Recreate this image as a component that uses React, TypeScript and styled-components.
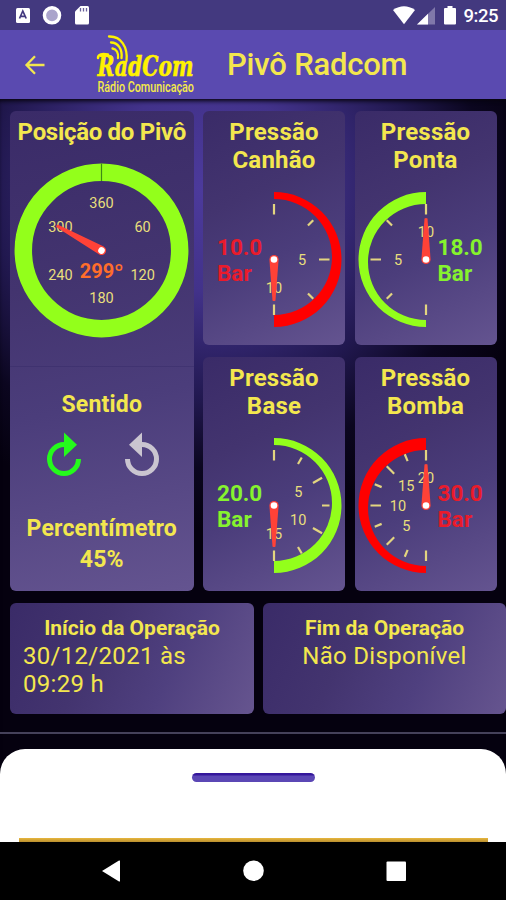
import React from "react";
import styled, { createGlobalStyle } from "styled-components";

const YELLOW = "#f3e74e";
const LIME = "#93ff1b";
const RED = "#ff0000";

const GlobalStyle = createGlobalStyle`
  *, *::before, *::after { box-sizing: border-box; }
  html, body { margin: 0; padding: 0; background: #000; }
  body { font-family: Roboto, "Liberation Sans", sans-serif; }
  svg { display: block; }
`;

const Screen = styled.div`
  width: 506px;
  height: 900px;
  display: flex;
  flex-direction: column;
  overflow: hidden;
  color: ${YELLOW};
`;

const StatusBar = styled.div`
  height: 30px;
  flex: none;
  display: flex;
  align-items: center;
  justify-content: space-between;
  padding: 0 8px 0 16px;
  background: #43397f;
`;

const StatusGroup = styled.div`
  display: flex;
  align-items: center;
`;

const Clock = styled.span`
  color: #fff;
  font-size: 18.5px;
  font-weight: 500;
  line-height: 30px;
  letter-spacing: -0.5px;
  margin-left: 8px;
  padding-top: 2px;
`;

const AppBar = styled.header`
  height: 69px;
  flex: none;
  display: flex;
  align-items: center;
  padding-left: 24px;
  background: #5a4ab0;
`;

const LogoBox = styled.div`
  margin-left: 46px;
  width: 110px;
  height: 69px;
`;

const ScreenTitle = styled.h1`
  margin: 0 0 0 26px;
  font-size: 31px;
  line-height: 69px;
  font-weight: 500;
  letter-spacing: -0.2px;
  white-space: nowrap;
`;

const Body = styled.main`
  height: 743px;
  flex: none;
  display: flex;
  flex-direction: column;
  padding: 12px 0 0 10px;
  background: radial-gradient(circle 340px at 205px 90px, #4c3a9c 0%, #42328a 30%, #21184f 62%, #0b061f 82%, #05010f 100%);
  box-shadow: inset 0 4px 4px -2px #07040f;
`;

const CardGrid = styled.section`
  flex: none;
  display: grid;
  grid-template-columns: 183.5px 142px 142px;
  grid-template-rows: 234px 234px;
  gap: 12px 9.5px;
`;

const Card = styled.article<{ $tall?: boolean }>`
  grid-row: ${(p) => (p.$tall ? "span 2" : "auto")};
  display: flex;
  flex-direction: column;
  align-items: center;
  padding-top: 7px;
  border-radius: 6px;
  overflow: hidden;
  background: linear-gradient(${(p) => (p.$tall ? "168deg" : "155deg")}, #3a2b68 0%, #43346f 35%, #4b3d7b 60%, #645490 100%);
`;

const CardTitle = styled.h2<{ $spacing?: number; $top?: number }>`
  margin: ${(p) => p.$top ?? 0}px 0 0;
  font-size: 24px;
  line-height: 28px;
  font-weight: 700;
  letter-spacing: ${(p) => p.$spacing ?? 0.2}px;
  text-align: center;
  white-space: nowrap;
`;

const SubTitle = styled(CardTitle)`
  font-size: 23px;
  line-height: 31px;
`;

const Separator = styled.div`
  width: 184px;
  height: 1px;
  margin-top: 26px;
  background: rgba(50, 36, 100, 0.35);
`;

const Directions = styled.div`
  display: flex;
  gap: 30px;
  margin: 9px 0 0 3px;
`;

const OperationRow = styled.section`
  flex: none;
  display: grid;
  grid-template-columns: 244px 243px;
  gap: 9px;
  margin-top: 12px;
`;

const OperationCard = styled.article`
  height: 111px;
  padding: 12px 13px 0 13px;
  border-radius: 6px;
  background: linear-gradient(115deg, #3a2b68 0%, #43346f 35%, #4f407f 65%, #66558f 100%);
`;

const OperationTitle = styled.h3`
  margin: 0;
  font-size: 21px;
  line-height: 27px;
  font-weight: 700;
  text-align: center;
  white-space: nowrap;
`;

const OperationText = styled.p<{ $center?: boolean }>`
  margin: 0;
  font-size: 24px;
  line-height: 28px;
  letter-spacing: 0.3px;
  white-space: pre-line;
  text-align: ${(p) => (p.$center ? "center" : "left")};
`;

const Rule = styled.div`
  flex: none;
  height: 2px;
  margin: 18px 0 0 -10px;
  background: #45415a;
`;

const Sheet = styled.section`
  flex: none;
  height: 93px;
  margin: 15px 0 0 -10px;
  display: flex;
  flex-direction: column;
  align-items: center;
  justify-content: space-between;
  padding-top: 24px;
  border-radius: 25px 25px 0 0;
  background: #fff;
`;

const Handle = styled.div`
  width: 123px;
  height: 9px;
  border-radius: 5px;
  background: linear-gradient(#35179c 0 2px, #5b47b5 3px);
`;

const SheetEdge = styled.div`
  width: 469px;
  height: 4px;
  background: linear-gradient(#e8b63c, #b98f2f);
`;

const NavBar = styled.nav`
  height: 58px;
  flex: none;
  display: flex;
  align-items: center;
  justify-content: center;
  background: #000;
`;

const polar = (r: number, deg: number) => {
  const a = (deg * Math.PI) / 180;
  return { x: r * Math.sin(a), y: -r * Math.cos(a) };
};

const Needle = ({ angle, length }: { angle: number; length: number }) => (
  <g transform={`rotate(${angle})`}>
    <path d={`M-4.6 0 L-1.5 ${-length} Q0 ${-length - 1} 1.5 ${-length} L4.6 0 A4.6 4.6 0 0 1 -4.6 0Z`} fill="#ff4237" />
    <circle r="3.3" fill="#fff" />
  </g>
);

const ScaleLabel = styled.text`
  font-size: 14.5px;
  fill: #e9df7c;
  text-anchor: middle;
`;

const PivotReading = styled.text`
  font-size: 20px;
  font-weight: 700;
  fill: #ff6d2b;
  text-anchor: middle;
`;

const Reading = styled.text`
  font-size: 22.5px;
  font-weight: 700;
`;

const PivotGauge = () => (
  <svg width="183" height="194" viewBox="-91.5 -104.5 183 194">
    <circle r="78.2" fill="none" stroke={LIME} strokeWidth="17.5" />
    <path d="M0 -87V-69.5" stroke="#3d8a16" strokeWidth="1.2" />
    {[60, 120, 180, 240, 300, 360].map((n) => {
      const p = polar(47.5, n);
      return (
        <ScaleLabel key={n} x={p.x} y={p.y + 5.3}>
          {n}
        </ScaleLabel>
      );
    })}
    <PivotReading x="0" y="27">299º</PivotReading>
    <Needle angle={299} length={51} />
  </svg>
);

type PressureProps = {
  side: "left" | "right";
  labels: number[];
  max: number;
  steps: number;
  color: string;
  textColor: string;
  value: string;
};

const PressureGauge = ({ side, labels, max, steps, color, textColor, value }: PressureProps) => {
  const base = side === "right" ? 0 : 180;
  const textX = side === "right" ? -57 : 11.5;
  return (
    <svg width="142" height="171" viewBox="-71 -85.5 142 171">
      <path transform={`rotate(${base})`} d="M0 -67.5A67.5 67.5 0 0 1 0 67.5V55.5A58 58 0 0 0 0 -60.5Z" fill={color} />
      {Array.from({ length: steps + 1 }, (_, i) => {
        const angle = base + (180 / steps) * i;
        const a = polar(i % 2 ? 48 : 45, angle);
        const b = polar(55.5, angle);
        return <line key={i} x1={a.x} y1={a.y} x2={b.x} y2={b.y} stroke="#e3d580" strokeWidth="2.2" />;
      })}
      {labels.map((n) => {
        const p = polar(28, base + (180 * n) / max);
        return (
          <ScaleLabel key={n} x={p.x} y={p.y + 5.3}>
            {n}
          </ScaleLabel>
        );
      })}
      <Reading x={textX} y="-5" fill={textColor}>{value}</Reading>
      <Reading x={textX} y="21" fill={textColor}>Bar</Reading>
      <Needle angle={base + 180} length={41} />
    </svg>
  );
};

const RotateIcon = ({ color, clockwise }: { color: string; clockwise?: boolean }) => (
  <svg width="48" height="52" viewBox="-24 -30 48 52">
    <g transform={clockwise ? "scale(-1 1)" : undefined}>
      <path d="M0 -14.500A14.500 14.500 0 1 1 -14.500 0" fill="none" stroke={color} strokeWidth="5" />
      <path d="M0 -26.500V-2L-13 -14.300Z" fill={color} />
    </g>
  </svg>
);

const LogoScript = styled.text`
  font-family: "DejaVu Serif", serif;
  font-size: 27px;
  font-weight: 700;
  font-style: italic;
  fill: #fff200;
  stroke: #fff200;
  stroke-width: 0.6px;
`;

const LogoCaption = styled.text`
  font-size: 14px;
  font-weight: 500;
  fill: #f6ea49;
`;

const Logo = () => (
  <LogoBox>
    <svg width="110" height="69" viewBox="91 30 110 69" overflow="visible">
      <g fill="none" stroke="#fff200" strokeWidth="2.3" strokeLinecap="round">
        <path d="M109 36.500C121 36 128 47 126.500 61" />
        <path d="M111 42.500C118 42.500 122.500 49 121.500 58" />
        <path d="M112.500 48.500C116.500 49 118.500 53 118 58" />
      </g>
      <path d="M98 58C98 54 102 53.500 108 54.500" fill="none" stroke="#fff200" strokeWidth="2.500" strokeLinecap="round" />
      <LogoScript x="97.500" y="76" textLength="96" lengthAdjust="spacingAndGlyphs">RadCom</LogoScript>
      <LogoCaption x="97.500" y="91.500" textLength="96.500" lengthAdjust="spacingAndGlyphs">Rádio Comunicação</LogoCaption>
    </svg>
  </LogoBox>
);

const pressures: (PressureProps & { name: string })[] = [
  { name: "Canhão", side: "right", labels: [5, 10], max: 10, steps: 4, color: RED, textColor: "#ea1b2b", value: "10.0" },
  { name: "Ponta", side: "left", labels: [5, 10], max: 10, steps: 4, color: LIME, textColor: "#86f32e", value: "18.0" },
  { name: "Base", side: "right", labels: [5, 10, 15], max: 15, steps: 6, color: LIME, textColor: "#86f32e", value: "20.0" },
  { name: "Bomba", side: "left", labels: [5, 10, 15, 20], max: 20, steps: 8, color: RED, textColor: "#ea1b2b", value: "30.0" },
];

export default function App() {
  return (
    <>
      <GlobalStyle />
      <Screen>
        <StatusBar>
          <StatusGroup>
            <svg width="76" height="30" viewBox="16 0 76 30">
              <rect x="16" y="8" width="14" height="15" rx="1.5" fill="#fff" />
              <path d="M19.5 18.5L22.8 11L26.2 18.5M20.7 16.3H25" fill="none" stroke="#43397f" strokeWidth="1.7" />
              <circle cx="52" cy="15.3" r="7.6" fill="#aaa4cb" stroke="#fff" strokeWidth="3.4" />
              <path d="M80.5 6H87.5Q89 6 89 7.5V23Q89 24.5 87.5 24.5H76.5Q75 24.5 75 23V11.5Z" fill="#fff" />
              <path d="M80.5 8V11.5M83.5 8V11.5M86.5 8V11.5" stroke="#6b619c" strokeWidth="1.3" />
            </svg>
          </StatusGroup>
          <StatusGroup>
            <svg width="64" height="30" viewBox="390 0 64 30">
              <path d="M391 10Q402 2.5 413 10L402 24.3Z" fill="#fff" />
              <path d="M433 7V24.5H415Z" fill="#8078aa" />
              <path d="M426 13.8V24.5H415Z" fill="#fff" />
              <path d="M445.5 6H450.5V8H453Q454 8 454 9V23.5Q454 24.5 453 24.5H443Q442 24.5 442 23.5V9Q442 8 443 8H445.5Z" fill="#fff" />
            </svg>
            <Clock>9:25</Clock>
          </StatusGroup>
        </StatusBar>

        <AppBar>
          <svg width="21" height="20" viewBox="0 0 21 20">
            <path d="M20.5 10H3M11 1.2L2.5 10L11 18.8" fill="none" stroke={YELLOW} strokeWidth="2.3" />
          </svg>
          <Logo />
          <ScreenTitle>Pivô Radcom</ScreenTitle>
        </AppBar>

        <Body>
          <CardGrid>
            <Card $tall>
              <CardTitle $spacing={-0.3}>Posição do Pivô</CardTitle>
              <PivotGauge />
              <Separator />
              <SubTitle $top={22}>Sentido</SubTitle>
              <Directions>
                <RotateIcon color="#25fa1c" clockwise />
                <RotateIcon color="#cac5d0" />
              </Directions>
              <SubTitle $top={32}>Percentímetro</SubTitle>
              <SubTitle>45%</SubTitle>
            </Card>
            {pressures.map(({ name, ...gauge }) => (
              <Card key={name}>
                <CardTitle>
                  Pressão
                  <br />
                  {name}
                </CardTitle>
                <PressureGauge {...gauge} />
              </Card>
            ))}
          </CardGrid>

          <OperationRow>
            <OperationCard>
              <OperationTitle>Início da Operação</OperationTitle>
              <OperationText>{"30/12/2021 às\n09:29 h"}</OperationText>
            </OperationCard>
            <OperationCard>
              <OperationTitle>Fim da Operação</OperationTitle>
              <OperationText $center>Não Disponível</OperationText>
            </OperationCard>
          </OperationRow>

          <Rule />
          <Sheet>
            <Handle />
            <SheetEdge />
          </Sheet>
        </Body>

        <NavBar>
          <svg width="506" height="58" viewBox="0 842 506 58" fill="#fff">
            <path d="M102 871L119 860.5Q120 860.2 120 861V881Q120 881.8 119 881.4Z" />
            <circle cx="253.5" cy="870.8" r="10.3" />
            <rect x="386.5" y="861.5" width="19.5" height="19.5" rx="1" />
          </svg>
        </NavBar>
      </Screen>
    </>
  );
}
